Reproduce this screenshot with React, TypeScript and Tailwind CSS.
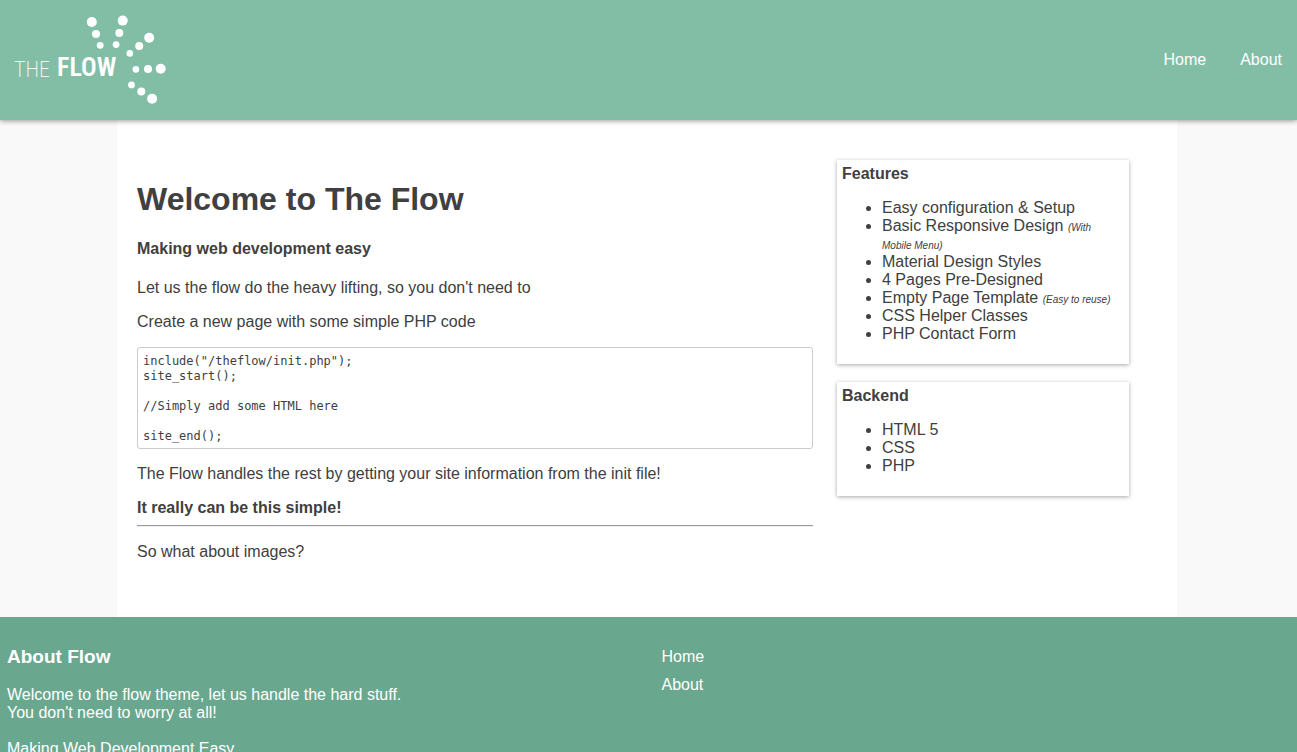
const navLinks = ['Home', 'About'];

const features = [
  { label: 'Easy configuration & Setup' },
  { label: 'Basic Responsive Design', note: '(With Mobile\u00a0Menu)' },
  { label: 'Material Design Styles' },
  { label: '4 Pages Pre-Designed' },
  { label: 'Empty Page Template', note: '(Easy to reuse)' },
  { label: 'CSS Helper Classes' },
  { label: 'PHP Contact Form' },
];

const backend = [{ label: 'HTML 5' }, { label: 'CSS' }, { label: 'PHP' }];

const codeSample = `include("/theflow/init.php");
site_start();

//Simply add some HTML here

site_end();`;

// [cx, cy, r]
const dots = [
  [91.8, 22, 5],
  [96, 34, 4],
  [100.2, 45.3, 3.4],
  [122.7, 20.6, 5],
  [119.3, 33, 4],
  [116.1, 44.6, 3.4],
  [149.2, 37.8, 5],
  [139.2, 46, 4],
  [129.8, 53.4, 3.3],
  [135.9, 69.4, 3.3],
  [148, 69, 4],
  [160.7, 68.7, 5],
  [131.5, 84.9, 3.4],
  [141.3, 91.6, 4],
  [152.1, 98.8, 5],
];

function Logo() {
  return (
    <svg width="180" height="120" viewBox="0 0 180 120" fill="white" role="img" aria-label="The Flow">
      <text x="14" y="77" className="font-['Roboto_Condensed','Liberation_Sans_Narrow',sans-serif] text-[22px] font-extralight">
        THE
      </text>
      <text x="57" y="76" className="font-['Roboto_Condensed','Liberation_Sans_Narrow',sans-serif] text-[26px] font-semibold">
        FLOW
      </text>
      {dots.map(([cx, cy, r]) => (
        <circle key={`${cx}-${cy}`} cx={cx} cy={cy} r={r} />
      ))}
    </svg>
  );
}

interface CardProps {
  title: string;
  items: { label: string; note?: string }[];
}

function Card({ title, items }: CardProps) {
  return (
    <section className="bg-white p-[5px] pb-[21px] shadow-[0_1px_4px_rgba(0,0,0,0.35)]">
      <h2 className="font-bold">{title}</h2>
      <ul className="mt-4 list-disc pl-10">
        {items.map((item) => (
          <li key={item.label}>
            {item.label} {item.note && <em className="text-[10px] leading-none">{item.note}</em>}
          </li>
        ))}
      </ul>
    </section>
  );
}

export default function App() {
  return (
    <div className="min-h-screen bg-[#f9f9f9] font-['Liberation_Sans',Arial,sans-serif] text-base leading-[18px] text-[#404040]">
      {/* Header */}
      <header className="relative flex items-center justify-between bg-[#82bea6] pr-[15px] text-white shadow-[0_1px_5px_rgba(0,0,0,0.4)]">
        <a href="#home">
          <Logo />
        </a>
        <nav className="flex gap-[34px]">
          {navLinks.map((link) => (
            <a key={link} href={`#${link.toLowerCase()}`}>
              {link}
            </a>
          ))}
        </nav>
      </header>

      {/* Content */}
      <div className="pr-[3px]">
        <div className="mx-auto flex max-w-[1060px] items-start gap-6 bg-white pr-12 pb-14 pl-5">
          <main className="min-w-0 flex-1 pt-[61px]">
            <h1 className="text-[32px] leading-9 font-bold">Welcome to The Flow</h1>
            <h2 className="mt-[23px] font-bold">Making web development easy</h2>
            <p className="mt-[21px]">Let us the flow do the heavy lifting, so you don't need to</p>
            <p className="mt-4">Create a new page with some simple PHP code</p>
            <pre className="mt-4 overflow-x-auto rounded-[3px] border border-[#ccc] px-[5px] pt-[6px] pb-1 font-['DejaVu_Sans_Mono',monospace] text-[12px] leading-[15px]">
              {codeSample}
            </pre>
            <p className="mt-4">The Flow handles the rest by getting your site information from the init file!</p>
            <p className="mt-4 font-bold">It really can be this simple!</p>
            <hr className="mt-2 border-t border-b border-t-[#9a9a9a] border-b-[#eee]" />
            <p className="mt-4">So what about images?</p>
          </main>
          <aside className="flex w-[292px] flex-col gap-[18px] pt-10">
            <Card title="Features" items={features} />
            <Card title="Backend" items={backend} />
          </aside>
        </div>
      </div>

      {/* Footer */}
      <footer className="grid grid-cols-2 gap-[6px] bg-[#6aa78f] px-[7px] pt-7 pb-6 text-white">
        <div>
          <h3 className="text-[19px] leading-6 font-bold">About Flow</h3>
          <p className="mt-[17px]">
            Welcome to the flow theme, let us handle the hard stuff.
            <br />
            You don't need to worry at all!
          </p>
          <p className="mt-[18px]">Making Web Development Easy</p>
        </div>
        <ul className="flex flex-col gap-[10px] pt-[3px] pl-[10px]">
          {navLinks.map((link) => (
            <li key={link}>
              <a href={`#${link.toLowerCase()}`}>{link}</a>
            </li>
          ))}
        </ul>
      </footer>
    </div>
  );
}
